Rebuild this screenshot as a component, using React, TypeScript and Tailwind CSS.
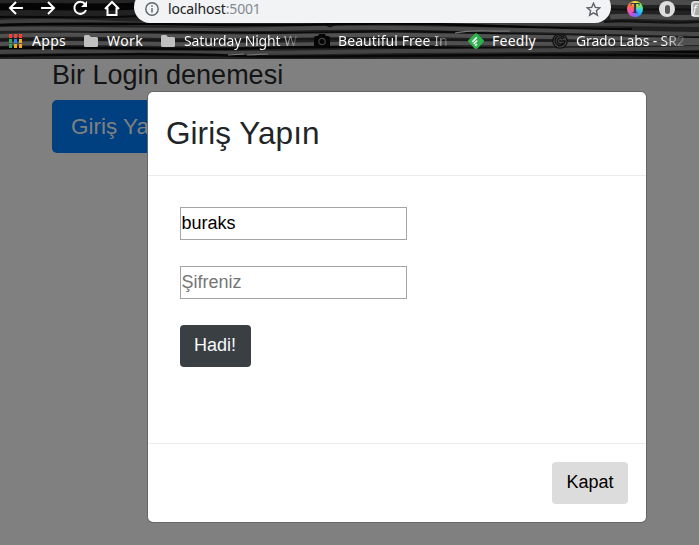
import React from "react";

type Streak = { d: string; c: string; w: number };

const streaks: Streak[] = [
  { d: "M0 1C60 0 110 3 180 1", c: "#262626", w: 3 },
  { d: "M0 7C40 5 90 9 134 6", c: "#050505", w: 7 },
  { d: "M0 14C50 10 100 15 145 12", c: "#222", w: 3 },
  { d: "M0 17C50 16 80 19 140 16", c: "#080808", w: 2 },
  { d: "M0 22C60 19 90 23 160 24S400 21 699 25", c: "#3f3f3f", w: 4 },
  { d: "M0 25C100 21 220 27 345 24S530 31 632 29", c: "#050505", w: 2.5 },
  { d: "M0 29C80 27 160 32 270 29S480 29 699 34", c: "#4a4a4a", w: 4 },
  { d: "M90 33C160 29 260 35 345 32S475 35 699 38", c: "#0c0c0c", w: 2 },
  { d: "M0 36C80 32 165 38 285 36S390 34 699 40", c: "#505050", w: 4 },
  { d: "M0 40C100 37 170 43 265 40S440 40 699 44", c: "#181818", w: 2 },
  { d: "M0 44C90 40 190 47 330 44S530 46 699 43", c: "#505050", w: 4 },
  { d: "M0 48C110 46 170 51 260 48S485 49 699 52", c: "#060606", w: 2.5 },
  { d: "M0 52C80 50 190 55 330 52S530 52 699 48", c: "#444", w: 4 },
  { d: "M0 56C100 54 165 53 240 56S450 52 699 56", c: "#080808", w: 2.5 },
  { d: "M0 58.5H699", c: "#222", w: 1 },
  { d: "M608 2C632 4 665 1 699 3M610 17C625 14 670 19 699 17", c: "#4b4b4b", w: 5 },
  { d: "M608 9C635 11 660 8 699 10M604 22C635 19 660 25 699 22", c: "#111", w: 2 },
  { d: "M455 33C475 29 485 32 510 31M228 55L244 54M247 55L268 54", c: "#777", w: 1.2 },
  { d: "M323 24H337L330 27Z", c: "#080808", w: 1 },
];

function Wood() {
  return (
    <svg className="col-start-1 row-start-1 h-[59px] w-[699px]" viewBox="0 0 699 59" fill="none">
      <path fill="#222" d="M0 0H699V59H0Z" />
      {streaks.map((s, i) => <path key={i} d={s.d} stroke={s.c} strokeWidth={s.w} />)}
    </svg>
  );
}

function NavIcons() {
  return (
    <svg className="h-[22px] w-[134px] shrink-0" viewBox="0 0 134 22" fill="none" stroke="#fff" strokeWidth="2">
      <path d="M23 8H10M16 2L10 8L16 14M41 8H54M48 2L54 8L48 14" />
      <path d="M85 4A6 6 0 1 0 86 10" />
      <path d="M87 1V7H81Z" fill="#fff" stroke="none" />
      <path d="M105 9L112 2L119 9M107.5 7.5V15H116.5V7.5" />
    </svg>
  );
}

const Folder = () => (
  <svg className="h-4 w-[14px]" viewBox="0 0 14 16"><path fill="#c0c0c0" d="M0 3.5Q0 2 1.5 2H5L7 4H12.5Q14 4 14 5.5V12.5Q14 14 12.5 14H1.5Q0 14 0 12.5Z" /></svg>
);

function AppsIcon() {
  const colors = ["#f44336", "#f44336", "#f44336", "#34a062", "#2486f5", "#eeaa22", "#34a062", "#eeaa22", "#eeaa22"];
  return (
    <svg className="h-4 w-[14px]" viewBox="0 0 14 16">
      {colors.map((c, i) => <rect key={i} x={(i % 3) * 5} y={1 + Math.floor(i / 3) * 5} width="3" height="4" fill={c} />)}
    </svg>
  );
}

const Camera = () => (
  <svg className="h-4 w-4" viewBox="0 0 16 16"><path fill="#050505" d="M2 3H4L5 1H11L12 3H14Q16 3 16 5V13Q16 15 14 15H2Q0 15 0 13V5Q0 3 2 3Z" /><circle cx="8" cy="8.5" r="3.2" fill="none" stroke="#444" strokeWidth="1.2" /></svg>
);

const Feedly = () => (
  <svg className="h-4 w-4" viewBox="0 0 16 16"><path fill="#2bb24c" d="M7 .5Q8-.5 9 .5L15.5 7Q16.5 8 15.5 9L10 15Q9 16 8 16Q7 16 6 15L.5 9Q-.5 8 .5 7Z" /><path d="M4.2 9L8.8 4.4M5.7 11L9.2 7.5M7.2 12.8L9 11" stroke="white" strokeWidth="1.6" /></svg>
);

const Grado = () => (
  <svg className="h-4 w-4" viewBox="0 0 16 16" fill="none" stroke="#101010"><circle cx="8" cy="8" r="7.2" fill="#444" strokeWidth="1.3" /><path d="M12.5 5.5A5 5 0 1 0 13 8H7M11 6A3.2 3.2 0 1 0 11 10" strokeWidth="1.3" /></svg>
);

function Bookmark({ icon, label, cell, text }: { icon: React.ReactNode; label: string; cell: string; text: string }) {
  return (
    <div className={`flex h-5 shrink-0 items-center ${cell}`}>
      {icon}
      <span className={`overflow-hidden whitespace-nowrap ${text}`}>{label}</span>
    </div>
  );
}

function BrowserBar() {
  const fade = "bg-[linear-gradient(90deg,#fff_78%,transparent_100%)] bg-clip-text text-transparent";
  return (
    <header className="grid h-[59px] w-[699px] overflow-hidden">
      <Wood />
      <div className="z-10 col-start-1 row-start-1 font-['Noto_Sans',sans-serif]">
        <div className="flex h-[31px] items-start">
          <NavIcons />
          <div className="-mt-[9px] flex h-8 w-[477px] shrink-0 items-center rounded-full bg-[#f1f3f4] pt-[4px] pr-[10px] pl-[11px]">
            <svg className="h-[14px] w-[14px]" viewBox="0 0 14 14" fill="none" stroke="#5f6368" strokeWidth="1.4"><circle cx="7" cy="7" r="6.2" /><path d="M7 6V10.5M7 3.2V4.8" /></svg>
            <span className="ml-[9px] text-[14px] leading-5 tracking-[-0.16px] text-[#202124]">localhost<span className="text-[#858990]">:5001</span></span>
            <svg className="ml-auto h-[15px] w-[15px]" viewBox="0 0 15 15" fill="none" stroke="#5f6368" strokeWidth="1.4"><path d="M7.5 1.3L9.3 5.4L13.8 5.8L10.4 8.8L11.4 13.2L7.5 10.9L3.6 13.2L4.6 8.8L1.2 5.8L5.7 5.4Z" /></svg>
          </div>
          <div className="ml-4 flex shrink-0 gap-4 pt-[1px]">
            <div className="flex h-4 w-4 items-center justify-center rounded-full bg-[conic-gradient(#ffe13a,#8ae05a,#31d4e2,#388ef5,#c04df0,#ff5797,#ff7038,#ffe13a)] font-['Liberation_Serif',serif] text-[14px] font-bold leading-4 text-[#173850]">T</div>
            <div className="flex h-4 w-4 items-center justify-center rounded-full bg-[#dedede]"><span className="h-[9px] w-[5px] rounded-full bg-[#555]" /></div>
            <div className="flex h-4 w-4 items-center rounded-sm border-2 border-[#ddd] bg-[#aaa] text-[11px] italic leading-3 text-white">f</div>
          </div>
        </div>
        <nav className="flex h-5 pl-[9px] text-[14px] leading-5 text-white">
          <Bookmark icon={<AppsIcon />} label="Apps" cell="w-[75px] gap-[9px]" text="tracking-[0.3px]" />
          <Bookmark icon={<Folder />} label="Work" cell="w-[77px] gap-[9px]" text="tracking-[0.4px]" />
          <Bookmark icon={<Folder />} label="Saturday Night W" cell="w-[153px] gap-[9px]" text={`w-[118px] tracking-[-0.15px] ${fade}`} />
          <Bookmark icon={<Camera />} label="Beautiful Free In" cell="w-[154px] gap-2" text={`w-[116px] tracking-[0.08px] ${fade}`} />
          <Bookmark icon={<Feedly />} label="Feedly" cell="w-[84px] gap-2" text="tracking-[0.25px]" />
          <Bookmark icon={<Grado />} label="Grado Labs - SR2" cell="w-[138px] gap-2" text={`w-[113px] tracking-[-0.15px] ${fade}`} />
        </nav>
      </div>
    </header>
  );
}

function LoginModal() {
  return (
    <section role="dialog" className="absolute top-[92px] left-[148px] flex h-[430px] w-[498px] flex-col rounded-[5px] bg-white shadow-[0_0_0_1px_#666]">
      <div className="flex h-[84px] shrink-0 items-center border-b border-[#e9ecef] px-[18px]">
        <h2 className="text-[31.5px] leading-[47px] tracking-[0.06px] text-[#212529]">Giriş Yapın</h2>
      </div>
      <form className="flex h-[267px] flex-col items-start px-8 pt-[31px]">
        <input aria-label="Kullanıcı" defaultValue="buraks" className="h-[33px] w-[227px] border border-[#a5a5a5] px-[0.4px] text-[18px] text-black" />
        <input type="password" placeholder="Şifreniz" className="mt-[26px] h-[33px] w-[227px] border border-[#a5a5a5] px-[0.4px] text-[18px] placeholder:text-[#757575]" />
        <button type="button" className="mt-[26px] h-[42px] w-[71px] rounded-[4px] bg-[#3a3f44] pr-[1px] pb-[2px] text-[18px] text-[#f8f9fa]">Hadi!</button>
      </form>
      <footer className="flex h-[79px] justify-end border-t border-[#e9ecef] pt-[18px] pr-[18px]">
        <button className="h-[42px] w-[76px] rounded-[4px] bg-[#dcdcdc] pb-[2px] text-[18px] text-black">Kapat</button>
      </footer>
    </section>
  );
}

export default function App() {
  return (
    <div className="relative h-[545px] w-[699px] overflow-hidden bg-[#808080] font-['Liberation_Sans',sans-serif]">
      <BrowserBar />
      <main className="px-[52px]">
        <h1 className="h-[41px] text-[27px] leading-[32px] text-[#121415]">Bir Login denemesi</h1>
        <button className="block h-[53px] w-[160px] rounded-[5px] bg-[#004080] pl-[19px] text-left text-[22.5px] whitespace-nowrap text-[#808080]">Giriş Yapın</button>
      </main>
      <LoginModal />
    </div>
  );
}
